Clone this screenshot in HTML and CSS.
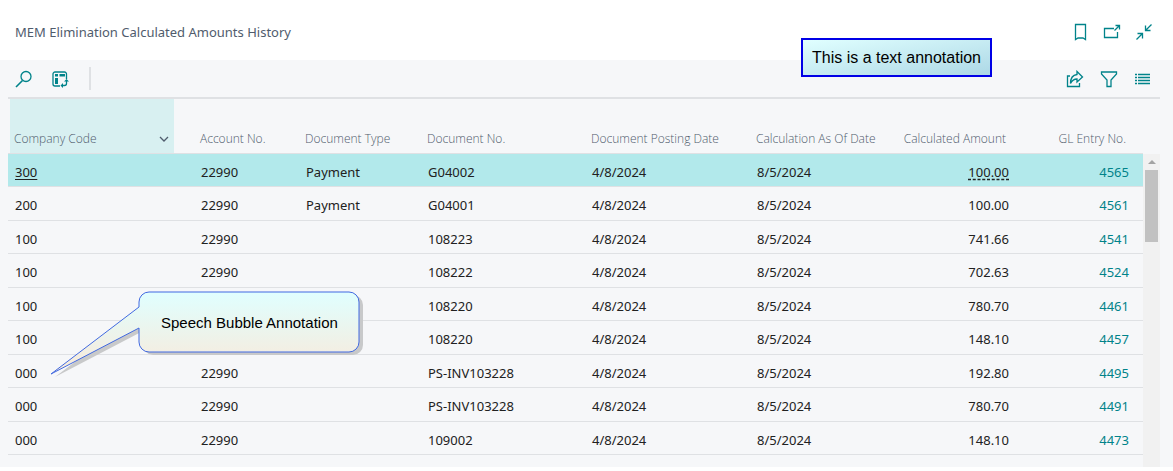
FILE: index.html
```html
<!DOCTYPE html>
<html lang="en">
<head>
    <meta charset="UTF-8">
    <meta name="viewport" content="width=device-width, initial-scale=1.0">
    <title>MEM Elimination Calculated Amounts History</title>
    <link rel="stylesheet" href="styles.css">
</head>
<body>
    <header class="title-bar">
        <h1>MEM Elimination Calculated Amounts History</h1>
        <div class="window-actions">
            <button class="icon-button" aria-label="Bookmark">
                <svg width="18" height="18" viewBox="0 0 18 18"><path d="M4.500 1.500h10v15l-2.500-1.500H7L4.500 16.500z"/></svg>
            </button>
            <button class="icon-button" aria-label="Open in new window">
                <svg width="18" height="18" viewBox="0 0 18 18"><path d="M11 5.500H1.500v9h13V9M11.500 7.500l4.500-4.500M12.500 2.500h4v4"/></svg>
            </button>
            <button class="icon-button" aria-label="Collapse">
                <svg width="18" height="18" viewBox="0 0 18 18"><path d="M1.500 16.500l6-6M2.500 10.500h5v5M16.500 1.500l-6 6M10.500 2.500v5h5"/></svg>
            </button>
        </div>
    </header>

    <main class="page">
        <div class="toolbar">
            <div class="tools">
                <button class="icon-button" aria-label="Search">
                    <svg width="18" height="18" viewBox="0 0 18 18"><circle cx="11" cy="6.500" r="5"/><path d="M7.500 10.500L1 17" stroke-width="1.600"/></svg>
                </button>
                <button class="icon-button" aria-label="Analyze">
                    <svg width="18" height="18" viewBox="0 0 18 18"><path d="M15.500 9V4a2 2 0 0 0-2-2H4a2 2 0 0 0-2 2v10a2 2 0 0 0 2 2h5"/><path class="solid" d="M4 4h3v2.500H4zM8.500 4H14v2.500H8.500zM4 8h3v6H4z"/><path d="M11 15.500h2.500a2 2 0 0 0 2-2V11"/><path class="solid" d="M13 11.500l2.500-2.500 2.500 2.500zM12 13L9.500 15.500l2.500 2.500z"/></svg>
                </button>
                <span class="divider"></span>
            </div>
            <div class="tools tools-right">
                <button class="icon-button" aria-label="Share">
                    <svg width="18" height="18" viewBox="0 0 18 18"><path d="M4 6H1.500v10.500h12V13"/><path d="M11 1.500L16.500 7 11 12V9C8 9 6 10.500 4.500 13.500 4.500 8.500 7 5 11 4.500z"/></svg>
                </button>
                <button class="icon-button" aria-label="Filter">
                    <svg width="18" height="18" viewBox="0 0 18 18"><path d="M1.500 2h15v2L11 10v6.500H7V10L1.500 4z"/></svg>
                </button>
                <button class="icon-button" aria-label="List view">
                    <svg width="18" height="18" viewBox="0 0 18 18"><path d="M1 4.500h2M4 4.500h12M1 7.500h2M4 7.500h12M1 10.500h2M4 10.500h12M1 13.500h2M4 13.500h12"/></svg>
                </button>
            </div>
        </div>

        <div class="list">
            <table>
                <colgroup>
                    <col class="col-company">
                    <col class="col-gap">
                    <col class="col-account">
                    <col class="col-type">
                    <col class="col-document">
                    <col class="col-posting">
                    <col class="col-calculation">
                    <col class="col-amount">
                    <col class="col-entry">
                </colgroup>
                <thead>
                    <tr>
                        <th class="sorted">
                            <div class="sort-label">Company Code
                                <svg width="10" height="6" viewBox="0 0 10 6"><path d="M1 1l4 4 4-4"/></svg>
                            </div>
                        </th>
                        <th></th>
                        <th>Account No.</th>
                        <th>Document Type</th>
                        <th>Document No.</th>
                        <th>Document Posting Date</th>
                        <th>Calculation As Of Date</th>
                        <th class="amount">Calculated Amount</th>
                        <th class="entry">GL Entry No.</th>
                    </tr>
                </thead>
                <tbody>
                    <tr class="selected"><td><span class="current">300</span></td><td></td><td>22990</td><td>Payment</td><td>G04002</td><td>4/8/2024</td><td>8/5/2024</td><td class="amount"><span class="drill">100.00</span></td><td class="entry"><a href="#">4565</a></td></tr>
                    <tr><td>200</td><td></td><td>22990</td><td>Payment</td><td>G04001</td><td>4/8/2024</td><td>8/5/2024</td><td class="amount">100.00</td><td class="entry"><a href="#">4561</a></td></tr>
                    <tr><td>100</td><td></td><td>22990</td><td></td><td>108223</td><td>4/8/2024</td><td>8/5/2024</td><td class="amount">741.66</td><td class="entry"><a href="#">4541</a></td></tr>
                    <tr><td>100</td><td></td><td>22990</td><td></td><td>108222</td><td>4/8/2024</td><td>8/5/2024</td><td class="amount">702.63</td><td class="entry"><a href="#">4524</a></td></tr>
                    <tr><td>100</td><td></td><td></td><td></td><td>108220</td><td>4/8/2024</td><td>8/5/2024</td><td class="amount">780.70</td><td class="entry"><a href="#">4461</a></td></tr>
                    <tr><td>100</td><td></td><td></td><td></td><td>108220</td><td>4/8/2024</td><td>8/5/2024</td><td class="amount">148.10</td><td class="entry"><a href="#">4457</a></td></tr>
                    <tr><td>000</td><td></td><td>22990</td><td></td><td>PS-INV103228</td><td>4/8/2024</td><td>8/5/2024</td><td class="amount">192.80</td><td class="entry"><a href="#">4495</a></td></tr>
                    <tr><td>000</td><td></td><td>22990</td><td></td><td>PS-INV103228</td><td>4/8/2024</td><td>8/5/2024</td><td class="amount">780.70</td><td class="entry"><a href="#">4491</a></td></tr>
                    <tr><td>000</td><td></td><td>22990</td><td></td><td>109002</td><td>4/8/2024</td><td>8/5/2024</td><td class="amount">148.10</td><td class="entry"><a href="#">4473</a></td></tr>
                </tbody>
            </table>
            <div class="scrollbar">
                <span class="scroll-arrow"></span>
                <span class="scroll-thumb"></span>
            </div>
        </div>
    </main>

    <div class="note">This is a text annotation</div>

    <div class="bubble">
        <svg width="314" height="90" viewBox="0 0 314 90">
            <defs>
                <linearGradient id="bubble-fill" x1="0" y1="0" x2="0" y2="1">
                    <stop offset="0" stop-color="#e0ffff"/>
                    <stop offset="0.75" stop-color="#f3eee2"/>
                    <stop offset="1" stop-color="#faebd7"/>
                </linearGradient>
            </defs>
            <path class="bubble-shadow" transform="translate(4 3)" d="M99 2H299a10 10 0 0 1 10 10V52a10 10 0 0 1-10 10H99a10 10 0 0 1-10-10V38L1 84 89 17V12a10 10 0 0 1 10-10z"/>
            <path class="bubble-shape" d="M99 2H299a10 10 0 0 1 10 10V52a10 10 0 0 1-10 10H99a10 10 0 0 1-10-10V38L1 84 89 17V12a10 10 0 0 1 10-10z"/>
        </svg>
        <span class="bubble-text">Speech Bubble Annotation</span>
    </div>
</body>
</html>
```
FILE: styles.css
```css
* {
    box-sizing: border-box;
}
body {
    margin: 0;
    background-color: #fff;
    color: #212121;
    font-family: "Noto Sans", "Open Sans", sans-serif;
    font-size: 13px;
}
.title-bar {
    display: flex;
    justify-content: space-between;
    align-items: center;
    height: 60px;
    padding: 4px 20px 0 15px;
}
h1 {
    margin: 0;
    color: #505c6d;
    font-size: 13px;
    font-weight: 400;
}
.window-actions {
    display: flex;
    gap: 14px;
}
.icon-button {
    width: 18px;
    height: 18px;
    padding: 0;
    border: 0;
    background: none;
    cursor: pointer;
}
svg {
    display: block;
    fill: none;
    stroke: #00838a;
    stroke-width: 1.3;
}
.icon-button .solid {
    fill: #00838a;
    stroke: none;
}
.page {
    padding: 0 13px 0 8px;
    background-color: #f6f7f9;
}
.toolbar {
    display: flex;
    justify-content: space-between;
    height: 39px;
    padding: 0 8px 0 7px;
    border-bottom: 2px solid #dfe1e4;
}
.tools {
    display: flex;
    align-items: center;
    gap: 18px;
}
.tools-right {
    gap: 16px;
}
.divider {
    width: 2px;
    height: 23px;
    margin-left: 2px;
    background-color: #dfe1e4;
}
.list {
    display: flex;
    align-items: flex-start;
}
table {
    flex: 1;
    table-layout: fixed;
    border-collapse: separate;
    border-spacing: 0;
}
.col-company { width: 166px; }
.col-gap { width: 20px; }
.col-account { width: 105px; }
.col-type { width: 122px; }
.col-document { width: 164px; }
.col-posting { width: 165px; }
.col-calculation { width: 140px; }
.col-amount { width: 125px; }
.col-entry { width: 128px; }
th {
    height: 55px;
    padding: 0 0 5px 6px;
    border-bottom: 1px solid #dfe1e4;
    color: #505c6d;
    font-family: "Open Sans", "Noto Sans", sans-serif;
    font-size: 12px;
    font-weight: 300;
    line-height: 18px;
    text-align: left;
    vertical-align: bottom;
    white-space: nowrap;
}
th.sorted {
    background: linear-gradient(to right, transparent 2px, #d8f0f1 2px);
}
.sort-label {
    display: flex;
    justify-content: space-between;
    align-items: center;
    padding-right: 5px;
}
.sort-label svg {
    stroke: #505c6d;
}
td {
    height: 33px;
    padding: 3px 0 0 7px;
    border-bottom: 1px solid #dfe1e4;
    line-height: 18px;
    white-space: nowrap;
}
tr:nth-child(even) td {
    height: 34px;
}
.selected td {
    background-color: #b2e9eb;
}
.amount,
.entry {
    text-align: right;
}
th.amount {
    padding-right: 9px;
}
td.amount {
    padding-right: 6px;
}
th.entry {
    padding-right: 17px;
}
td.entry {
    padding-right: 14px;
}
td a {
    color: #00838a;
    text-decoration: none;
}
.current {
    text-decoration: underline;
    text-underline-offset: 2px;
}
.drill {
    text-decoration: underline dashed;
    text-underline-offset: 2px;
}
.scrollbar {
    display: flex;
    flex-direction: column;
    align-items: center;
    width: 17px;
    height: 313px;
    margin-top: 55px;
    padding-top: 6px;
    background-color: #f1f1f1;
}
.scroll-arrow {
    border: 4px solid transparent;
    border-top: 0;
    border-bottom-color: #a3a3a3;
}
.scroll-thumb {
    width: 13px;
    height: 72px;
    margin-top: 6px;
    background-color: #c1c1c1;
}
.note {
    position: absolute;
    top: 38px;
    left: 801px;
    padding: 9px;
    border: 2px solid #0000e6;
    background: linear-gradient(to bottom right, #e0ffff, #add8e6);
    color: #000;
    font: 16px/17px "Liberation Sans", Arial, sans-serif;
}
.bubble {
    position: absolute;
    top: 290px;
    left: 50px;
}
.bubble-shadow {
    fill: #c8c9ca;
    stroke: none;
}
.bubble-shape {
    fill: url(#bubble-fill);
    stroke: #4169e1;
    stroke-width: 1;
}
.bubble-text {
    position: absolute;
    top: 24px;
    left: 111px;
    color: #000;
    font: 15px/17px "Liberation Sans", Arial, sans-serif;
    white-space: nowrap;
}
```
